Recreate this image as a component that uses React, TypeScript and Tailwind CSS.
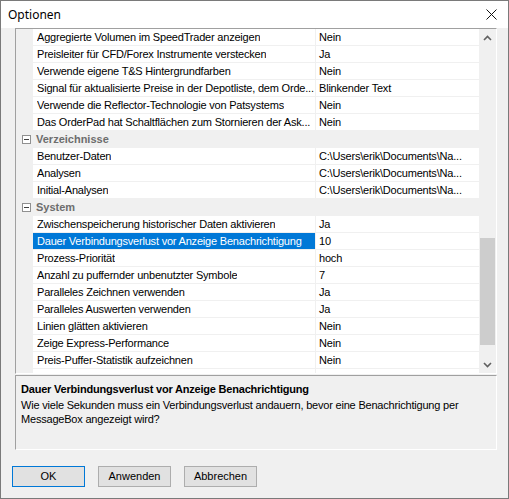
type Row =
  | { kind: "item"; name: string; value: string; selected?: boolean }
  | { kind: "category"; name: string };

const rows: Row[] = [
  { kind: "item", name: "Aggregierte Volumen im SpeedTrader anzeigen", value: "Nein" },
  { kind: "item", name: "Preisleiter für CFD/Forex Instrumente verstecken", value: "Ja" },
  { kind: "item", name: "Verwende eigene T&S Hintergrundfarben", value: "Nein" },
  { kind: "item", name: "Signal für aktualisierte Preise in der Depotliste, dem Orde...", value: "Blinkender Text" },
  { kind: "item", name: "Verwende die Reflector-Technologie von Patsystems", value: "Nein" },
  { kind: "item", name: "Das OrderPad hat Schaltflächen zum Stornieren der Ask...", value: "Nein" },
  { kind: "category", name: "Verzeichnisse" },
  { kind: "item", name: "Benutzer-Daten", value: "C:\\Users\\erik\\Documents\\Na..." },
  { kind: "item", name: "Analysen", value: "C:\\Users\\erik\\Documents\\Na..." },
  { kind: "item", name: "Initial-Analysen", value: "C:\\Users\\erik\\Documents\\Na..." },
  { kind: "category", name: "System" },
  { kind: "item", name: "Zwischenspeicherung historischer Daten aktivieren", value: "Ja" },
  { kind: "item", name: "Dauer Verbindungsverlust vor Anzeige Benachrichtigung", value: "10", selected: true },
  { kind: "item", name: "Prozess-Priorität", value: "hoch" },
  { kind: "item", name: "Anzahl zu puffernder unbenutzter Symbole", value: "7" },
  { kind: "item", name: "Paralleles Zeichnen verwenden", value: "Ja" },
  { kind: "item", name: "Paralleles Auswerten verwenden", value: "Ja" },
  { kind: "item", name: "Linien glätten aktivieren", value: "Nein" },
  { kind: "item", name: "Zeige Express-Performance", value: "Nein" },
  { kind: "item", name: "Preis-Puffer-Statistik aufzeichnen", value: "Nein" },
];

function Chevron({ down }: { down?: boolean }) {
  return (
    <svg width="9" height="6" viewBox="0 0 9 6" className={down ? "rotate-180" : ""}>
      <path d="M1 5 L4.5 1.5 L8 5" fill="none" stroke="#606060" strokeWidth="1.6" />
    </svg>
  );
}

function CollapseBox() {
  return (
    <svg width="9" height="9" viewBox="0 0 9 9">
      <rect x="0.5" y="0.5" width="8" height="8" fill="#fff" stroke="#909090" />
      <path d="M2 4.5 H7" stroke="#404040" />
    </svg>
  );
}

function GridRow({ row }: { row: Row }) {
  if (row.kind === "category") {
    return (
      <div className="flex h-[17px] bg-[#f0f0f0]">
        <div className="flex w-[17px] shrink-0 items-center justify-center pl-[3px]">
          <CollapseBox />
        </div>
        <div className="flex items-center pl-[3px] font-bold text-[#6d6d6d]">{row.name}</div>
      </div>
    );
  }
  return (
    <div className="flex h-[17px]">
      <div className="w-[17px] shrink-0 bg-[#f0f0f0]" />
      <div className="flex flex-1 border-b border-[#f0f0f0] bg-white">
        <div
          className={`flex w-[283px] shrink-0 items-center overflow-hidden whitespace-nowrap border-r border-[#f0f0f0] pl-[4px] tracking-[-0.2px] ${
            row.selected ? "bg-[#0078d7] text-white" : "text-black"
          }`}
        >
          <span className="truncate">{row.name}</span>
        </div>
        <div className="flex flex-1 items-center overflow-hidden whitespace-nowrap pl-[3px] tracking-[-0.2px] text-black">
          {row.value}
        </div>
      </div>
    </div>
  );
}

export default function App() {
  return (
    <div
      className="flex h-[499px] w-[509px] flex-col border border-[#7a7a7a] bg-[#f0f0f0] text-[11px] leading-none"
      style={{ fontFamily: '"Liberation Sans", Arial, sans-serif' }}
    >
      <div className="flex h-[27px] shrink-0 items-center justify-between bg-white pl-[7px] pr-[11px]">
        <span className="text-[12px] text-black" style={{ fontFamily: '"Noto Sans", "Liberation Sans", sans-serif' }}>
          Optionen
        </span>
        <svg width="11" height="11" viewBox="0 0 11 11">
          <path d="M0.5 0.5 L10.5 10.5 M10.5 0.5 L0.5 10.5" stroke="#111" strokeWidth="1" />
        </svg>
      </div>

      <div className="flex flex-1 flex-col pl-[14px] pr-[11px]">
        <div className="flex h-[346px] border-l border-t border-[#a0a0a0] border-b border-r border-b-white border-r-white">
          <div className="flex flex-1 flex-col overflow-hidden bg-white">
            {rows.map((r, i) => (
              <GridRow key={i} row={r} />
            ))}
            <div className="flex flex-1">
              <div className="w-[17px] shrink-0 bg-[#f0f0f0]" />
              <div className="w-[283px] border-r border-[#f0f0f0]" />
            </div>
          </div>
          <div className="flex w-[17px] shrink-0 flex-col bg-[#f0f0f0]">
            <div className="flex h-[17px] items-center justify-center">
              <Chevron />
            </div>
            <div className="h-[192px]" />
            <div className="mx-px h-[107px] bg-[#cdcdcd]" />
            <div className="flex-1" />
            <div className="flex h-[17px] items-center justify-center">
              <Chevron down />
            </div>
          </div>
        </div>

        <div className="mt-[1px] h-[75px] border-l border-t border-[#a0a0a0] border-b border-r border-b-white border-r-white px-[5px] pt-[8px] tracking-[-0.2px]">
          <div className="font-bold text-black">Dauer Verbindungsverlust vor Anzeige Benachrichtigung</div>
          <div className="mt-[3px] leading-[14px] text-black">
            Wie viele Sekunden muss ein Verbindungsverlust andauern, bevor eine Benachrichtigung per MessageBox angezeigt
            wird?
          </div>
        </div>

        <div className="mt-[16px] flex gap-[13px]">
          <button className="-ml-[3px] h-[21px] w-[73px] border border-[#0078d7] bg-[#e1e1e1] text-[11px] text-black">
            OK
          </button>
          <button className="h-[21px] w-[73px] border border-[#adadad] bg-[#e1e1e1] text-[11px] text-black">
            Anwenden
          </button>
          <button className="h-[21px] w-[73px] border border-[#adadad] bg-[#e1e1e1] text-[11px] text-black">
            Abbrechen
          </button>
        </div>
      </div>
    </div>
  );
}
